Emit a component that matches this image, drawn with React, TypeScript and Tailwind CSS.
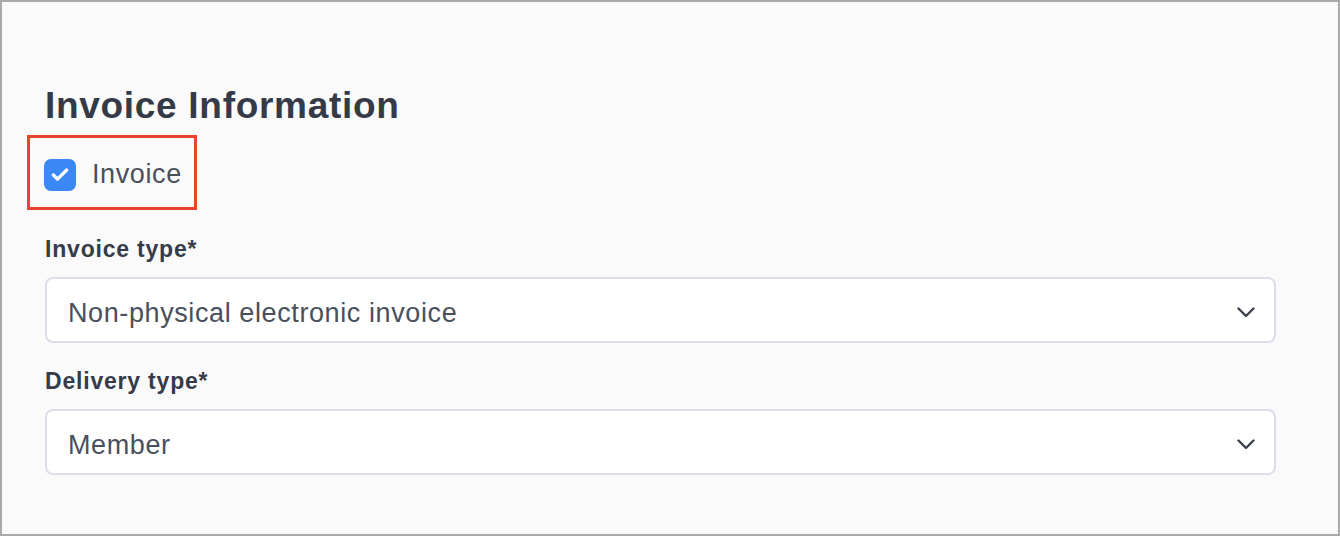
import { Check } from "lucide-react";

function Chevron() {
  return (
    <svg width="18" height="11" viewBox="0 0 18 11" fill="none" className="mt-[4px] text-[#3a3f4c]">
      <path d="M1.5 1.5 L9 9 L16.5 1.5" stroke="currentColor" strokeWidth="2.4" strokeLinecap="round" strokeLinejoin="round" />
    </svg>
  );
}

function SelectField({ label, value }: { label: string; value: string }) {
  return (
    <div className="flex flex-col">
      <div className="text-[23px] font-semibold leading-[28px] tracking-[0.8px] text-[#363b4a]">{label}</div>
      <div className="mt-[14px] flex h-[66px] items-center justify-between rounded-[8px] border-2 border-[#dcdfea] bg-white pl-[21px] pr-[19px]">
        <span className="pt-[6px] text-[27px] leading-none tracking-[0.6px] text-[#4a4f5c]">{value}</span>
        <Chevron />
      </div>
    </div>
  );
}

export default function App() {
  return (
    <div
      className="box-border h-[536px] w-[1340px] border-2 border-[#a9a9a9] bg-[#fafafa] pl-[43px] pr-[62px] pt-[82px]"
      style={{ fontFamily: '"Liberation Sans", Arial, sans-serif' }}
    >
      <h1 className="text-[37px] font-semibold leading-[44px] tracking-[0.7px] text-[#353a49]">Invoice Information</h1>

      <div className="-ml-[18px] mt-[7px] flex h-[75px] w-[170px] items-center gap-[16px] border-[3px] border-[#e8432d] pl-[14px] pt-[4px]">
        <span className="flex h-[32px] w-[32px] items-center justify-center rounded-[7px] bg-[#3b87f5]">
          <Check className="h-[20px] w-[20px] text-white" strokeWidth={4} />
        </span>
        <span className="text-[27px] leading-none tracking-[0.6px] text-[#4a4f5c]">Invoice</span>
      </div>

      <div className="mt-[25px] flex flex-col gap-[24px]">
        <SelectField label="Invoice type*" value="Non-physical electronic invoice" />
        <SelectField label="Delivery type*" value="Member" />
      </div>
    </div>
  );
}
